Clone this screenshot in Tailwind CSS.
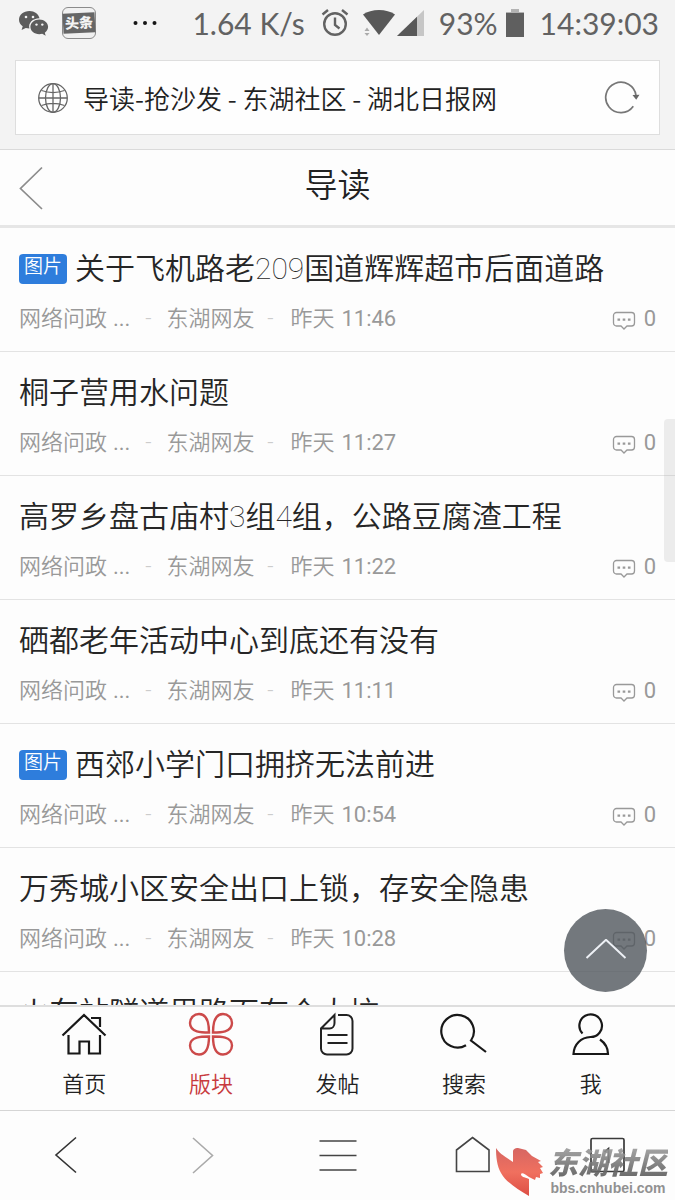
<!DOCTYPE html>
<html lang="zh-CN">
<head>
<meta charset="utf-8">
<meta name="viewport" content="width=device-width, initial-scale=1">
<title>导读-抢沙发 - 东湖社区 - 湖北日报网</title>
<script src="https://cdn.jsdelivr.net/npm/@tailwindcss/browser@4"></script>
</head>
<body class="relative flex h-screen flex-col overflow-hidden bg-[#fdfdfd] font-['Roboto','Noto_Sans_CJK_SC',sans-serif] text-[#333]">
<svg class="hidden" aria-hidden="true">
  <symbol id="comment" viewBox="0 0 24 20"><path d="M4.500 1.500h15a3 3 0 0 1 3 3v7.500a3 3 0 0 1-3 3h-4.500l-3 3-3-3H4.500a3 3 0 0 1-3-3V4.500a3 3 0 0 1 3-3Z" fill="none" stroke="currentColor" stroke-width="1.300"/><path d="M5.500 7.500h2.600v2.200H5.500zM10.700 7.500h2.600v2.200h-2.600zM15.900 7.500h2.600v2.200h-2.600z" fill="currentColor"/></symbol>
</svg>

<header class="shrink-0 border-b border-[#dadada] bg-[#f3f3f3]">
  <div class="flex h-[46px] items-center whitespace-nowrap pr-4 pl-[18px] font-['Lato','Noto_Sans_CJK_SC',sans-serif] text-[30px] leading-none text-[#626262]">
    <svg class="h-[27px] w-[31px]" viewBox="0 0 31 27"><path d="M11.500 1C5.500 1 1 4.900 1 9.700c0 2.700 1.500 5 3.700 6.600L3.600 20l4.200-2.100c1.200.3 2.300.5 3.600.5C10 13 14.500 8.300 21.500 8.200 20.500 4 16.500 1 11.500 1Z" fill="#5c5c5c"/><path d="M21.300 9.400c-5 0-8.900 3.300-8.900 7.400s3.900 7.400 8.900 7.400c1 0 2-.2 2.900-.4l3.500 1.900-.9-3c2-1.400 3.300-3.500 3.300-5.900 0-4.100-3.900-7.400-8.800-7.400Z" fill="#5c5c5c"/><g fill="#f3f3f3"><circle cx="8" cy="7" r="1.300"/><circle cx="15" cy="7" r="1.300"/><circle cx="18.500" cy="14.600" r="1.200"/><circle cx="24.300" cy="14.600" r="1.200"/></g></svg>
    <div class="ml-[13px] flex h-8 w-[34px] flex-col justify-center rounded-md border border-[#8b8b8b] bg-[#f1f1f1]"><span class="-rotate-3 bg-[#666] text-center text-[14px] leading-5 font-black text-[#f3f3f3]">头条</span></div>
    <svg class="ml-[36px] h-5 w-7" viewBox="0 0 28 20" fill="#151515"><circle cx="3.500" cy="10" r="2"/><circle cx="13" cy="10" r="2"/><circle cx="22.500" cy="10" r="2"/></svg>
    <span class="ml-auto">1.64 K/s</span>
    <svg class="ml-4 h-[30px] w-7" viewBox="0 0 28 30" fill="none" stroke="#626262" stroke-width="2.400"><circle cx="14" cy="16" r="10.800"/><path d="M14 9.500V17l4.500 3.500M1.500 6.500 7 2M26.500 6.500 21 2"/></svg>
    <svg class="ml-3 h-7 w-[34px]" viewBox="0 0 34 28"><path d="M2 5.500C10-.5 26-.5 34 5.500L18 26Z" fill="#585858"/><path d="m3.500 22 2.500-3.500L8.500 22ZM3.500 24h5L6 27Z" fill="#aaa"/></svg>
    <svg class="ml-[2px] h-7 w-7" viewBox="0 0 28 28"><path d="M0 27 27 1v26Z" fill="#c6c6c6"/><path d="M0 27 20 7.700V27Z" fill="#585858"/></svg>
    <span class="ml-[14px]">93%</span>
    <svg class="ml-2 h-7 w-[18px]" viewBox="0 0 18 28"><path d="M5 0h8v3h5v3H0V3h5Z" fill="#b3b3b3"/><path d="M0 4h18v24H0Z" fill="#5f5f5f"/></svg>
    <span class="ml-4">14:39:03</span>
  </div>
  <div class="mx-[15px] mt-[14px] mb-[14px] flex h-[75px] items-center border border-[#dedede] bg-[#fefefe] pr-[19px] pl-[21px]">
    <svg class="h-8 w-8 shrink-0" viewBox="0 0 32 32" fill="none" stroke="#666" stroke-width="1.300"><circle cx="16" cy="16" r="14.300"/><ellipse cx="16" cy="16" rx="7.500" ry="14.300"/><path d="M16 2v28M2 16h28M4.500 8.500c7 2.500 16 2.500 23 0M4.500 23.500c7-2.500 16-2.500 23 0"/></svg>
    <input aria-label="网址" class="ml-[14px] min-w-0 flex-1 bg-transparent font-['Noto_Sans_CJK_SC',sans-serif] text-[26px] font-[350] text-[#222] outline-none" value="导读-抢沙发 - 东湖社区 - 湖北日报网">
    <button aria-label="刷新"><svg class="h-9 w-9" viewBox="0 0 36 36" fill="none"><path d="M29.300 26.300A15.200 15.200 0 1 1 32 15.500" stroke="#777" stroke-width="1.700"/><path d="m28.500 15 7-.3-3.300 5Z" fill="#666"/></svg></button>
  </div>
</header>

<div class="grid h-[78px] shrink-0 grid-cols-[1fr_auto_1fr] items-center border-b-3 border-[#e6e6e6] px-[18px]">
  <button aria-label="返回" class="justify-self-start"><svg class="h-11 w-7" viewBox="0 0 28 44" fill="none" stroke="#8c8c8c" stroke-width="1.700"><path d="M24 1.500 2.500 22.500 24 43"/></svg></button>
  <h1 class="pb-1 text-[33px] leading-10 font-[350] text-[#222]">导读</h1>
</div>

<main class="min-h-0 flex-1 overflow-hidden">
  <ul>
    <li class="border-b border-[#e3e3e3] px-[19px] pt-[21px] pb-[18px]">
      <a href="#" class="flex items-center text-[30px] leading-10 font-[350] whitespace-nowrap text-[#262626]"><span class="mr-2 h-[30px] rounded-sm bg-[#2e7ddc] px-[5px] text-[19px] leading-[26px] text-white">图片</span>关于飞机路老<span class="font-thin">209</span>国道辉辉超市后面道路</a>
      <div class="mt-4 flex items-center text-[22px] leading-7 font-[350] text-[#999]"><span>网络问政<span class="ml-[6px] font-normal">...</span></span><span class="w-9 text-center text-[#ccc]">-</span><span>东湖网友</span><span class="w-9 pr-1 text-center text-[#ccc]">-</span><span>昨天<span class="ml-[7px] font-normal">11:46</span></span><svg class="mt-1 ml-auto h-5 w-6"><use href="#comment"/></svg><span class="ml-2 font-normal">0</span></div>
    </li>
    <li class="border-b border-[#e3e3e3] px-[19px] pt-[21px] pb-[18px]">
      <a href="#" class="flex items-center text-[30px] leading-10 font-[350] whitespace-nowrap text-[#262626]">桐子营用水问题</a>
      <div class="mt-4 flex items-center text-[22px] leading-7 font-[350] text-[#999]"><span>网络问政<span class="ml-[6px] font-normal">...</span></span><span class="w-9 text-center text-[#ccc]">-</span><span>东湖网友</span><span class="w-9 pr-1 text-center text-[#ccc]">-</span><span>昨天<span class="ml-[7px] font-normal">11:27</span></span><svg class="mt-1 ml-auto h-5 w-6"><use href="#comment"/></svg><span class="ml-2 font-normal">0</span></div>
    </li>
    <li class="border-b border-[#e3e3e3] px-[19px] pt-[21px] pb-[18px]">
      <a href="#" class="flex items-center text-[30px] leading-10 font-[350] whitespace-nowrap text-[#262626]">高罗乡盘古庙村<span class="font-thin">3</span>组<span class="font-thin">4</span>组，公路豆腐渣工程</a>
      <div class="mt-4 flex items-center text-[22px] leading-7 font-[350] text-[#999]"><span>网络问政<span class="ml-[6px] font-normal">...</span></span><span class="w-9 text-center text-[#ccc]">-</span><span>东湖网友</span><span class="w-9 pr-1 text-center text-[#ccc]">-</span><span>昨天<span class="ml-[7px] font-normal">11:22</span></span><svg class="mt-1 ml-auto h-5 w-6"><use href="#comment"/></svg><span class="ml-2 font-normal">0</span></div>
    </li>
    <li class="border-b border-[#e3e3e3] px-[19px] pt-[21px] pb-[18px]">
      <a href="#" class="flex items-center text-[30px] leading-10 font-[350] whitespace-nowrap text-[#262626]">硒都老年活动中心到底还有没有</a>
      <div class="mt-4 flex items-center text-[22px] leading-7 font-[350] text-[#999]"><span>网络问政<span class="ml-[6px] font-normal">...</span></span><span class="w-9 text-center text-[#ccc]">-</span><span>东湖网友</span><span class="w-9 pr-1 text-center text-[#ccc]">-</span><span>昨天<span class="ml-[7px] font-normal">11:11</span></span><svg class="mt-1 ml-auto h-5 w-6"><use href="#comment"/></svg><span class="ml-2 font-normal">0</span></div>
    </li>
    <li class="border-b border-[#e3e3e3] px-[19px] pt-[21px] pb-[18px]">
      <a href="#" class="flex items-center text-[30px] leading-10 font-[350] whitespace-nowrap text-[#262626]"><span class="mr-2 h-[30px] rounded-sm bg-[#2e7ddc] px-[5px] text-[19px] leading-[26px] text-white">图片</span>西郊小学门口拥挤无法前进</a>
      <div class="mt-4 flex items-center text-[22px] leading-7 font-[350] text-[#999]"><span>网络问政<span class="ml-[6px] font-normal">...</span></span><span class="w-9 text-center text-[#ccc]">-</span><span>东湖网友</span><span class="w-9 pr-1 text-center text-[#ccc]">-</span><span>昨天<span class="ml-[7px] font-normal">10:54</span></span><svg class="mt-1 ml-auto h-5 w-6"><use href="#comment"/></svg><span class="ml-2 font-normal">0</span></div>
    </li>
    <li class="border-b border-[#e3e3e3] px-[19px] pt-[21px] pb-[18px]">
      <a href="#" class="flex items-center text-[30px] leading-10 font-[350] whitespace-nowrap text-[#262626]">万秀城小区安全出口上锁，存安全隐患</a>
      <div class="mt-4 flex items-center text-[22px] leading-7 font-[350] text-[#999]"><span>网络问政<span class="ml-[6px] font-normal">...</span></span><span class="w-9 text-center text-[#ccc]">-</span><span>东湖网友</span><span class="w-9 pr-1 text-center text-[#ccc]">-</span><span>昨天<span class="ml-[7px] font-normal">10:28</span></span><svg class="mt-1 ml-auto h-5 w-6"><use href="#comment"/></svg><span class="ml-2 font-normal">0</span></div>
    </li>
    <li class="px-[19px] pt-[21px] pb-[18px]">
      <a href="#" class="flex items-center text-[30px] leading-10 font-[350] whitespace-nowrap text-[#262626]">火车站隧道里路面有个大坑</a>
    </li>
  </ul>
</main>

<nav aria-label="社区" class="grid h-[105px] shrink-0 grid-cols-5 border-t-2 border-[#dedede] px-[21px] text-[22px] leading-8 font-[350] text-[#222]">
  <a href="#" class="flex flex-col items-center gap-[13px] pt-[5px]"><svg class="h-11 w-12" viewBox="0 0 48 44" fill="none" stroke="#181818" stroke-width="2.200"><path d="M2.500 23.500 24 3l21.500 20.500M31 6h9v9M8.500 23v18.500h11v-12h9.500v12h11V23"/></svg>首页</a>
  <a href="#" aria-current="page" class="flex flex-col items-center gap-[13px] pt-[5px] text-[#c83a3e]"><svg class="h-11 w-12" viewBox="0 0 48 44" fill="none" stroke="#cc4a4a" stroke-width="2.400"><path d="M22 20.500C15 20.500 3 20.500 3 11c0-5 4-9 9-9 9.500 0 10 11.500 10 18.500ZM26 20.500c7 0 19 0 19-9.500 0-5-4-9-9-9-9.500 0-10 11.500-10 18.500ZM22 24.500c-7 0-19 0-19 9 0 5 4 9 9 9 9.500 0 10-11 10-18ZM26 24.500c7 0 19 0 19 9 0 5-4 9-9 9-9.500 0-10-11-10-18Z"/></svg>版块</a>
  <a href="#" class="flex flex-col items-center gap-[13px] pt-[5px]"><svg class="h-11 w-12" viewBox="0 0 48 44" fill="none" stroke="#222" stroke-width="2"><path d="M25 3h8.500a6 6 0 0 1 6 6V36.500a6 6 0 0 1-6 6H14a6 6 0 0 1-6-6V16.500L21.500 3v8c0 3-2 5.500-5 5.500H8M14.500 23h20M14.500 31h20"/></svg>发帖</a>
  <a href="#" class="flex flex-col items-center gap-[13px] pt-[5px]"><svg class="h-11 w-12" viewBox="0 0 48 44" fill="none" stroke="#181818" stroke-width="2.200"><path d="M26 33.200A16.300 16.300 0 1 1 31 28.500L46 40"/></svg>搜索</a>
  <a href="#" class="flex flex-col items-center gap-[13px] pt-[5px]"><svg class="h-11 w-12" viewBox="0 0 48 44" fill="none" stroke="#181818" stroke-width="2.200"><path d="M15.500 21.500A11.300 11.300 0 1 1 23.500 25C14 25.500 7 32 6.500 42h34.500c0-6-3-11-8-14.500"/></svg>我</a>
</nav>

<footer class="relative grid h-[90px] shrink-0 grid-cols-5 items-center justify-items-center border-t border-[#d5d5d5]">
  <button aria-label="后退"><svg class="h-10 w-10" viewBox="0 0 40 40" fill="none" stroke="#333" stroke-width="1.600"><path d="M28 1.500 8 19l20 17.500"/></svg></button>
  <button aria-label="前进"><svg class="h-10 w-10" viewBox="0 0 40 40" fill="none" stroke="#aaa" stroke-width="1.600"><path d="m10 2 19.500 17.500L10 37"/></svg></button>
  <button aria-label="菜单"><svg class="h-10 w-10" viewBox="0 0 40 40" stroke="#444" stroke-width="1.700"><path d="M1.500 5h37M1.500 19.500h37M1.500 34h37"/></svg></button>
  <button aria-label="主页"><svg class="h-10 w-10" viewBox="0 0 40 40" fill="none" stroke="#444" stroke-width="1.600"><path d="M19.500 1.500 36 14v21.500h-32.500V14Z"/></svg></button>
  <button aria-label="窗口"><svg class="h-10 w-10" viewBox="0 0 40 40" fill="none" stroke="#3a3a3a" stroke-width="1.700"><rect x="3" y="2.500" width="33" height="33" rx="1.500"/><path d="m16.500 16 4-3.500V27"/></svg></button>
  <div class="absolute right-[7px] bottom-1 flex items-center whitespace-nowrap">
    <svg class="h-12 w-12" viewBox="0 0 48 48"><defs><linearGradient id="flame" x2="0" y2="1"><stop stop-color="#d66662"/><stop offset=".5" stop-color="#f0705f"/><stop offset="1" stop-color="#dd4e44"/></linearGradient></defs><path d="M0 0c3 5 8 8 17 14V4c0-3 2-4 5-4l8 2 6 6 9 5-3 1 5 5-3 1 3 5-3 1v4l-4-1-1 3-6-3c-3-2-7-5-8-3 0 3 3 3 8 5v17C21 41 10 34 5 25 1 18 0 9 0 0Z" fill="url(#flame)"/></svg>
    <div class="ml-1 flex flex-col items-center">
      <span class="bg-linear-to-b from-[#9b9b9b]/90 to-[#555]/90 bg-clip-text text-[30px] leading-8 font-black text-transparent italic">东湖社区</span>
      <span class="font-['Liberation_Sans',sans-serif] text-[14px] leading-4 font-bold text-[#919191]">bbs.cnhubei.com</span>
    </div>
  </div>
</footer>

<div class="absolute top-[419px] right-0 h-[143px] w-[11px] rounded-l-sm bg-[#aaa]/20"></div>
<button aria-label="回到顶部" class="absolute right-7 bottom-[208px] flex h-[83px] w-[83px] items-center justify-center rounded-full bg-[#50565d]/80"><svg class="h-6 w-11" viewBox="0 0 44 24" fill="none" stroke="#edf0f5" stroke-width="2"><path d="M2.500 19 22 .8l19.500 18.200"/></svg></button>
</body>
</html>
